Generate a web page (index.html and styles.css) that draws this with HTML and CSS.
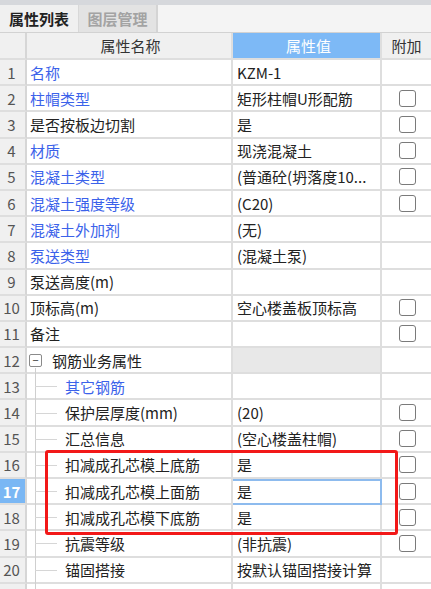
FILE: index.html
```html
<!DOCTYPE html>
<html lang="zh-CN">
<head>
  <meta charset="UTF-8">
  <title>属性列表</title>
  <link rel="stylesheet" href="styles.css">
</head>
<body>
  <div class="panel">
    <div class="topbar"></div>
    <div class="tabs">
      <div class="tab active">属性列表</div>
      <div class="tab">图层管理</div>
    </div>

    <div class="row head">
      <div class="cell num"></div>
      <div class="cell name">属性名称</div>
      <div class="cell val sel">属性值</div>
      <div class="cell add">附加</div>
    </div>

    <div class="row">
      <div class="cell num">1</div>
      <div class="cell name blue">名称</div>
      <div class="cell val">KZM-1</div>
      <div class="cell add"></div>
    </div>
    <div class="row">
      <div class="cell num">2</div>
      <div class="cell name blue">柱帽类型</div>
      <div class="cell val">矩形柱帽U形配筋</div>
      <div class="cell add"><span class="chk"></span></div>
    </div>
    <div class="row">
      <div class="cell num">3</div>
      <div class="cell name">是否按板边切割</div>
      <div class="cell val">是</div>
      <div class="cell add"><span class="chk"></span></div>
    </div>
    <div class="row">
      <div class="cell num">4</div>
      <div class="cell name blue">材质</div>
      <div class="cell val">现浇混凝土</div>
      <div class="cell add"><span class="chk"></span></div>
    </div>
    <div class="row">
      <div class="cell num">5</div>
      <div class="cell name blue">混凝土类型</div>
      <div class="cell val">(普通砼(坍落度10...</div>
      <div class="cell add"><span class="chk"></span></div>
    </div>
    <div class="row">
      <div class="cell num">6</div>
      <div class="cell name blue">混凝土强度等级</div>
      <div class="cell val">(C20)</div>
      <div class="cell add"><span class="chk"></span></div>
    </div>
    <div class="row">
      <div class="cell num">7</div>
      <div class="cell name blue">混凝土外加剂</div>
      <div class="cell val">(无)</div>
      <div class="cell add"></div>
    </div>
    <div class="row">
      <div class="cell num">8</div>
      <div class="cell name blue">泵送类型</div>
      <div class="cell val">(混凝土泵)</div>
      <div class="cell add"></div>
    </div>
    <div class="row">
      <div class="cell num">9</div>
      <div class="cell name">泵送高度(m)</div>
      <div class="cell val"></div>
      <div class="cell add"></div>
    </div>
    <div class="row">
      <div class="cell num">10</div>
      <div class="cell name">顶标高(m)</div>
      <div class="cell val">空心楼盖板顶标高</div>
      <div class="cell add"><span class="chk"></span></div>
    </div>
    <div class="row">
      <div class="cell num">11</div>
      <div class="cell name">备注</div>
      <div class="cell val"></div>
      <div class="cell add"><span class="chk"></span></div>
    </div>
    <div class="row">
      <div class="cell num">12</div>
      <div class="cell name group"><span class="toggle">−</span>钢筋业务属性</div>
      <div class="cell val grey"></div>
      <div class="cell add"></div>
    </div>
    <div class="row">
      <div class="cell num">13</div>
      <div class="cell name child blue">其它钢筋</div>
      <div class="cell val"></div>
      <div class="cell add"></div>
    </div>
    <div class="row">
      <div class="cell num">14</div>
      <div class="cell name child">保护层厚度(mm)</div>
      <div class="cell val">(20)</div>
      <div class="cell add"><span class="chk"></span></div>
    </div>
    <div class="row">
      <div class="cell num">15</div>
      <div class="cell name child">汇总信息</div>
      <div class="cell val">(空心楼盖柱帽)</div>
      <div class="cell add"><span class="chk"></span></div>
    </div>
    <div class="row">
      <div class="cell num">16</div>
      <div class="cell name child">扣减成孔芯模上底筋</div>
      <div class="cell val">是</div>
      <div class="cell add"><span class="chk"></span></div>
    </div>
    <div class="row">
      <div class="cell num sel">17</div>
      <div class="cell name child">扣减成孔芯模上面筋</div>
      <div class="cell val edit">是</div>
      <div class="cell add"><span class="chk"></span></div>
    </div>
    <div class="row">
      <div class="cell num">18</div>
      <div class="cell name child">扣减成孔芯模下底筋</div>
      <div class="cell val">是</div>
      <div class="cell add"><span class="chk"></span></div>
    </div>
    <div class="row">
      <div class="cell num">19</div>
      <div class="cell name child">抗震等级</div>
      <div class="cell val">(非抗震)</div>
      <div class="cell add"><span class="chk"></span></div>
    </div>
    <div class="row">
      <div class="cell num">20</div>
      <div class="cell name child">锚固搭接</div>
      <div class="cell val">按默认锚固搭接计算</div>
      <div class="cell add"></div>
    </div>
    <div class="row">
      <div class="cell num"></div>
      <div class="cell name child trail"></div>
      <div class="cell val"></div>
      <div class="cell add"></div>
    </div>

    <div class="mark"></div>
  </div>
</body>
</html>
```

FILE: styles.css
```css
body {
  margin: 0;
  font-family: "Noto Sans CJK SC", "Noto Sans", sans-serif;
  font-size: 15px;
  color: #222;
  background: #fff;
  overflow: hidden;
}

.panel {
  position: relative;
  width: 431px;
  height: 589px;
  overflow: hidden;
}

.topbar {
  height: 5px;
  background: #d6d8dc;
}

.tabs {
  display: flex;
  height: 28px;
  background: #f4f4f4;
  border-bottom: 1px solid #d2d2d2;
  box-sizing: border-box;
}

.tab {
  width: 79px;
  display: flex;
  align-items: center;
  justify-content: center;
  font-weight: bold;
  color: #a3a3a3;
  background: #e3e3e3;
  border-right: 2px solid #d4d4d4;
  box-sizing: border-box;
}

.tab.active {
  color: #222;
  background: #f0f0f0;
  border-right: 1px solid #d8d8d8;
}

.row {
  display: grid;
  grid-template-columns: 27px 206px 149px 49px;
  height: 26.2px;
}

.row.head {
  height: 27px;
}

.cell {
  box-sizing: border-box;
  border-right: 2px solid #dedede;
  border-bottom: 2px solid #dedede;
  display: flex;
  align-items: center;
  white-space: nowrap;
  overflow: hidden;
}

.cell.add {
  border-right: none;
  justify-content: center;
}

.num {
  justify-content: center;
  background: #f0f0f0;
  color: #555;
  border-right-color: #d6d6d6;
  padding-right: 2px;
}

.num.sel {
  background: #7ab7f4;
  color: #fff;
  font-weight: bold;
}

.head .cell {
  background: #f0f0f0;
  justify-content: center;
  color: #333;
}

.head .val.sel {
  background: #7db9f6;
  color: #fff;
}

.name {
  padding-left: 3px;
}

.val {
  padding-left: 4px;
}

.val.grey {
  background: #e8e8e8;
}

.val.edit {
  outline: 2px solid #8dbbee;
  outline-offset: -2px;
  margin-left: -2px;
  padding-left: 6px;
}

.blue {
  color: #3b62ea;
}

.group {
  position: relative;
  padding-left: 2px;
  overflow: visible;
}

.group::before {
  content: "";
  position: absolute;
  left: 8px;
  top: 20px;
  bottom: -2px;
  width: 1px;
  background: #cfcfcf;
}

.toggle {
  width: 13px;
  height: 13px;
  box-sizing: border-box;
  border: 1px solid #8a8a8a;
  border-radius: 2px;
  display: flex;
  align-items: center;
  justify-content: center;
  font-size: 11px;
  line-height: 1;
  color: #333;
  margin-right: 10px;
  background: #fff;
}

.child {
  position: relative;
  padding-left: 38px;
  overflow: visible;
}

.child::before {
  content: "";
  position: absolute;
  left: 8px;
  top: 0;
  bottom: -2px;
  width: 1px;
  background: #cfcfcf;
}

.child::after {
  content: "";
  position: absolute;
  left: 8px;
  top: 50%;
  width: 22px;
  height: 1px;
  background: #d6d6d6;
}

.child.trail::after {
  display: none;
}

.chk {
  width: 17px;
  height: 17px;
  box-sizing: border-box;
  border: 1.5px solid #7a7a7a;
  border-radius: 3px;
  background: #fff;
  margin-left: 1px;
}

.mark {
  position: absolute;
  left: 45px;
  top: 450px;
  width: 353px;
  height: 85px;
  box-sizing: border-box;
  border: 3px solid #f21818;
  border-radius: 3px;
  pointer-events: none;
}
```
